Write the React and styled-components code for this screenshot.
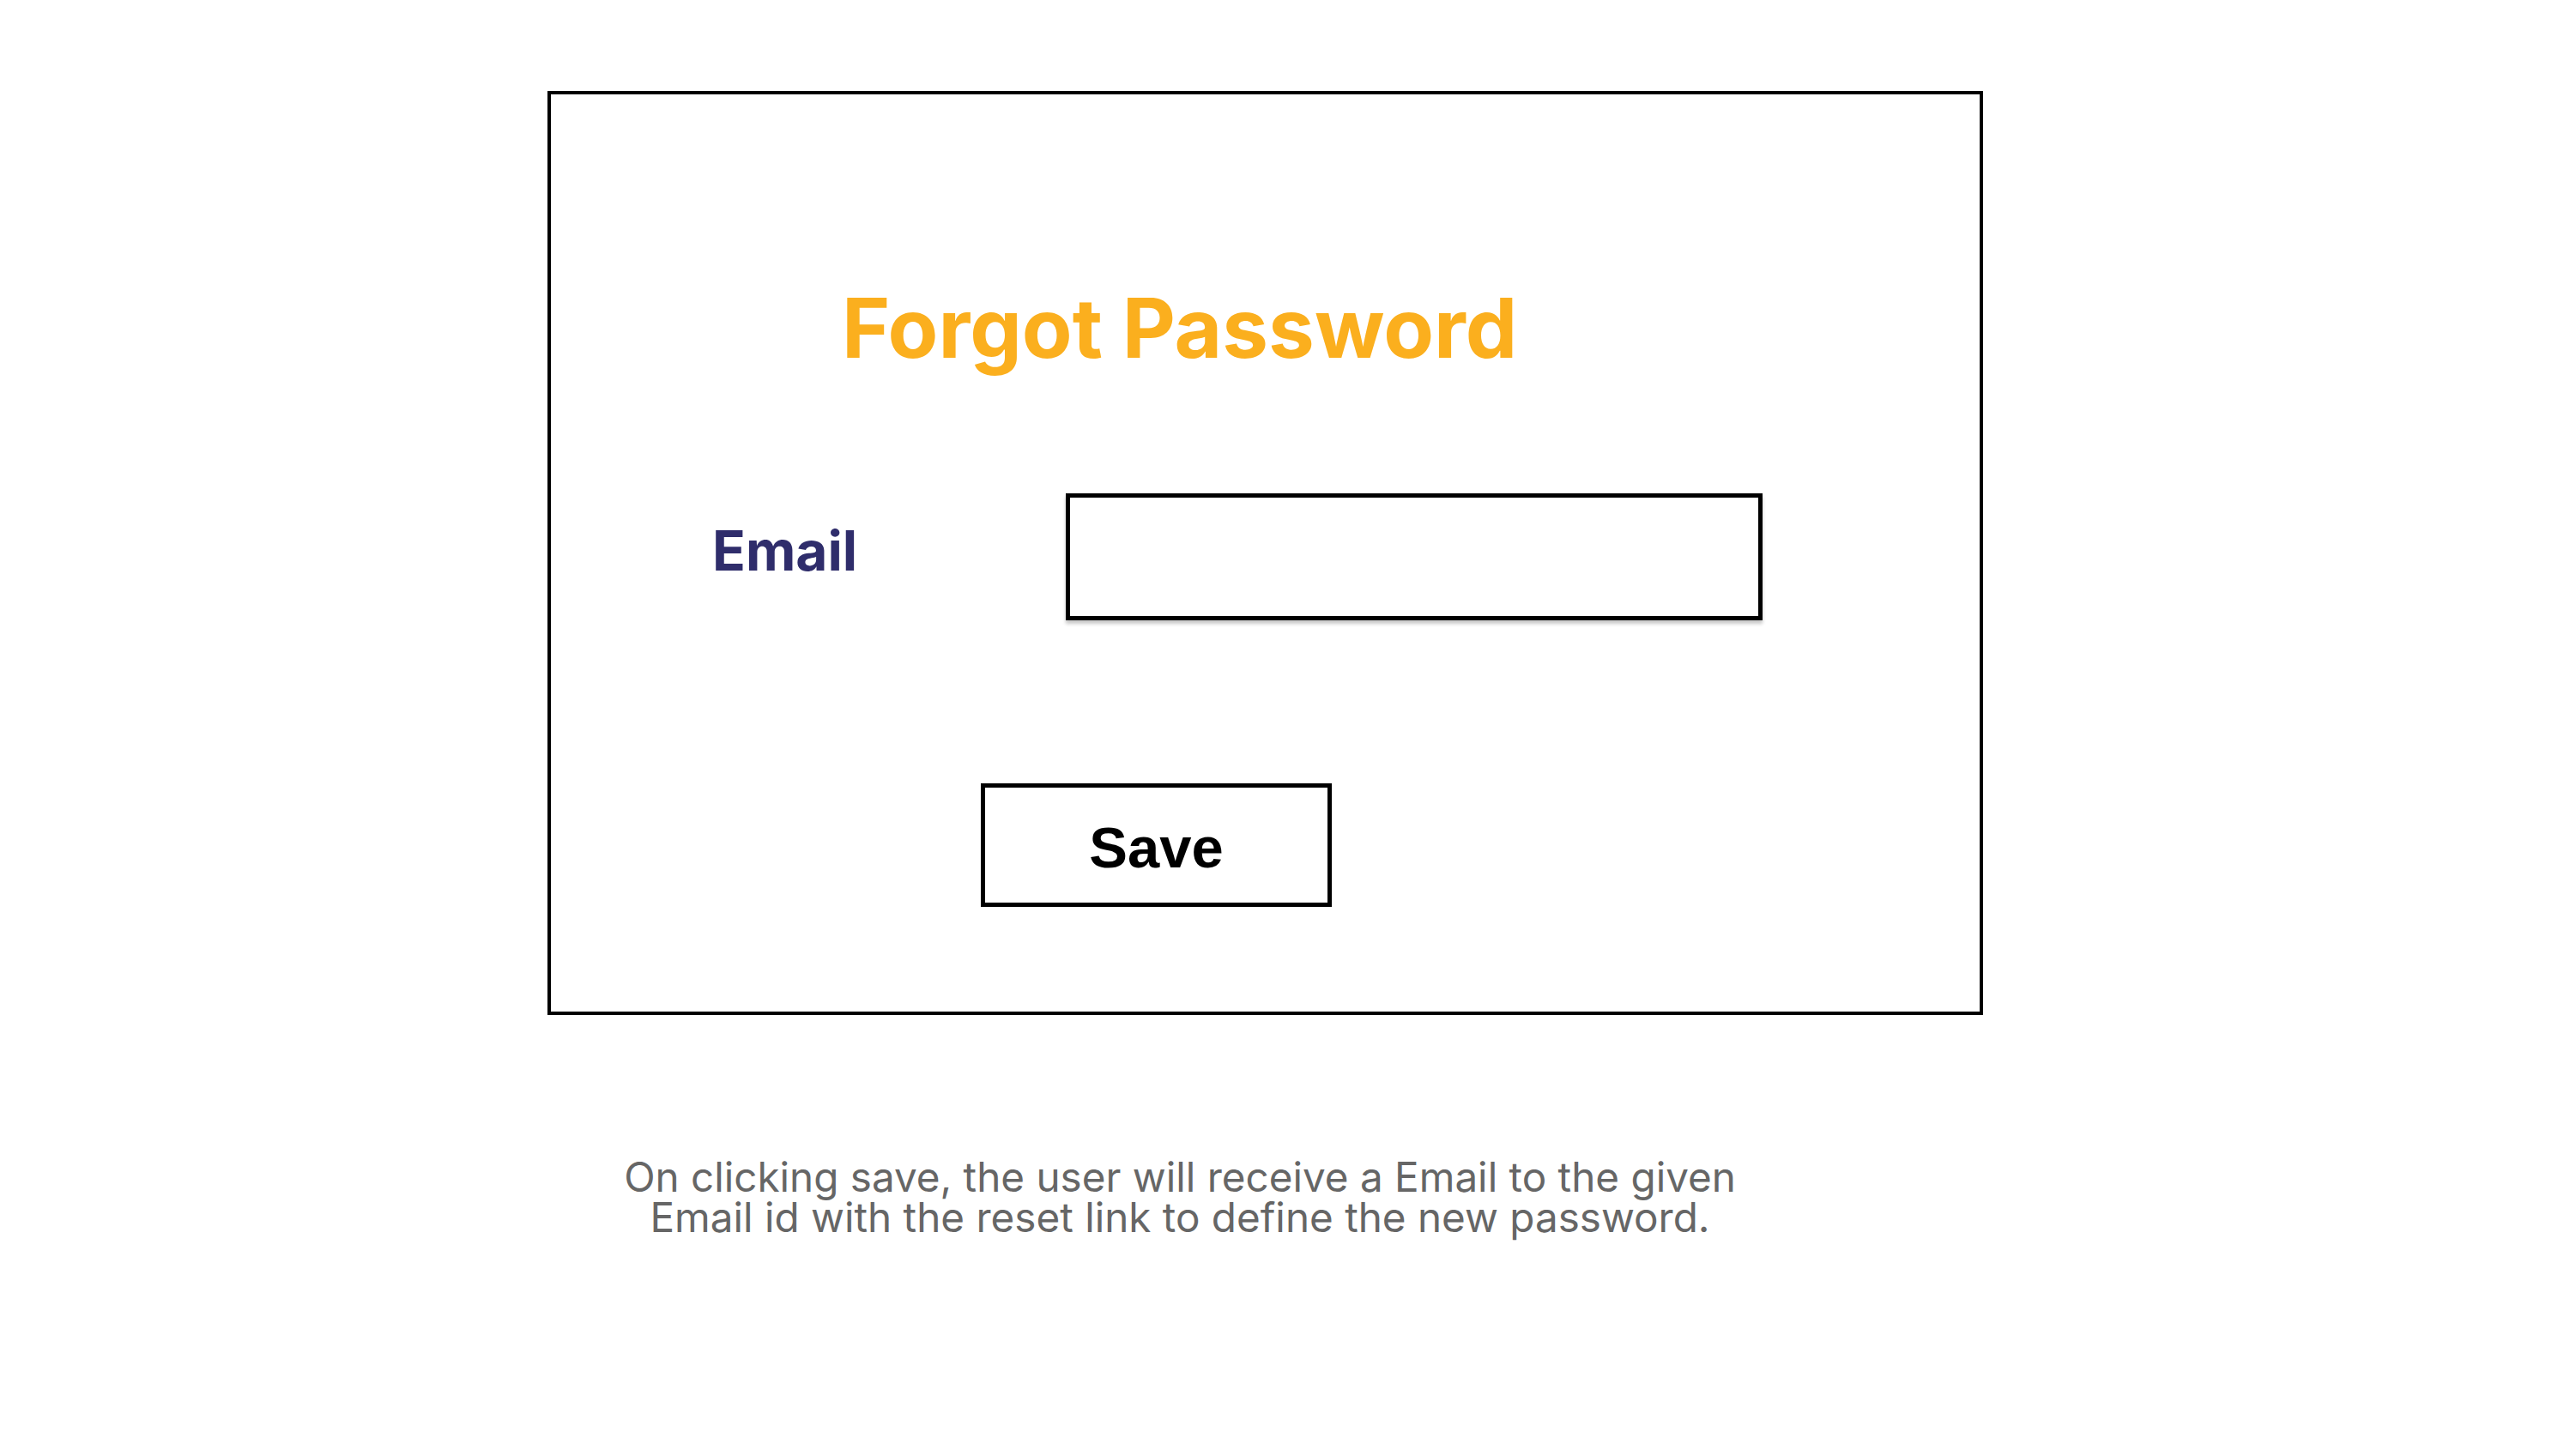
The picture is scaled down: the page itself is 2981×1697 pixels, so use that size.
import React from "react";
import styled, { createGlobalStyle } from "styled-components";

const Global = createGlobalStyle`
  html, body { margin: 0; padding: 0; background: #ffffff; }
  body { font-family: Inter, "Noto Sans", sans-serif; }
  * { box-sizing: border-box; }
`;

const Page = styled.div`
  width: 2981px;
  min-height: 1697px;
  padding: 106px 0 0 638px;
  display: flex;
  flex-direction: column;
  background: #ffffff;
`;

const Card = styled.section`
  width: 1673px;
  height: 1077px;
  border: 4px solid #000000;
  display: flex;
  flex-direction: column;
  align-items: flex-start;
`;

const Title = styled.h1`
  margin: 224px 0 0 339px;
  font-family: Inter, sans-serif;
  font-weight: 700;
  font-size: 96px;
  line-height: 1;
  color: #fbaf1e;
  letter-spacing: 0;
`;

const FieldRow = styled.div`
  margin: 145px 0 0 188px;
  display: flex;
  align-items: flex-start;
`;

const Label = styled.label`
  width: 412px;
  margin-top: 35px;
  font-family: Inter, sans-serif;
  font-weight: 700;
  font-size: 64px;
  line-height: 1;
  color: #2f2d6b;
`;

const Input = styled.input`
  width: 812px;
  height: 148px;
  border: 5px solid #000000;
  border-radius: 0;
  background: #ffffff;
  box-shadow: 0 4px 4px rgba(0, 0, 0, 0.22);
  outline: none;
  padding: 0 24px;
  font-family: Inter, sans-serif;
  font-size: 48px;
`;

const SaveButton = styled.button`
  margin: 190px 0 0 501px;
  width: 409px;
  height: 144px;
  border: 5px solid #000000;
  border-radius: 0;
  background: #ffffff;
  display: flex;
  align-items: center;
  justify-content: center;
  padding: 4px 0 0 0;
  font-family: "Liberation Sans", Arial, sans-serif;
  font-weight: 700;
  font-size: 67px;
  line-height: 1;
  color: #000000;
  cursor: pointer;
`;

const Caption = styled.p`
  width: 1474px;
  margin: 165px 0 0 0;
  text-align: center;
  font-family: Inter, sans-serif;
  font-weight: 400;
  font-size: 47.6px;
  line-height: 47px;
  color: #666666;
`;

export default function App() {
  return (
    <>
      <Global />
      <Page>
        <Card>
          <Title>Forgot Password</Title>
          <FieldRow>
            <Label htmlFor="email">Email</Label>
            <Input id="email" type="email" />
          </FieldRow>
          <SaveButton type="button">Save</SaveButton>
        </Card>
        <Caption>
          On clicking save, the user will receive a Email to the given
          <br />
          Email id with the reset link to define the new password.
        </Caption>
      </Page>
    </>
  );
}
